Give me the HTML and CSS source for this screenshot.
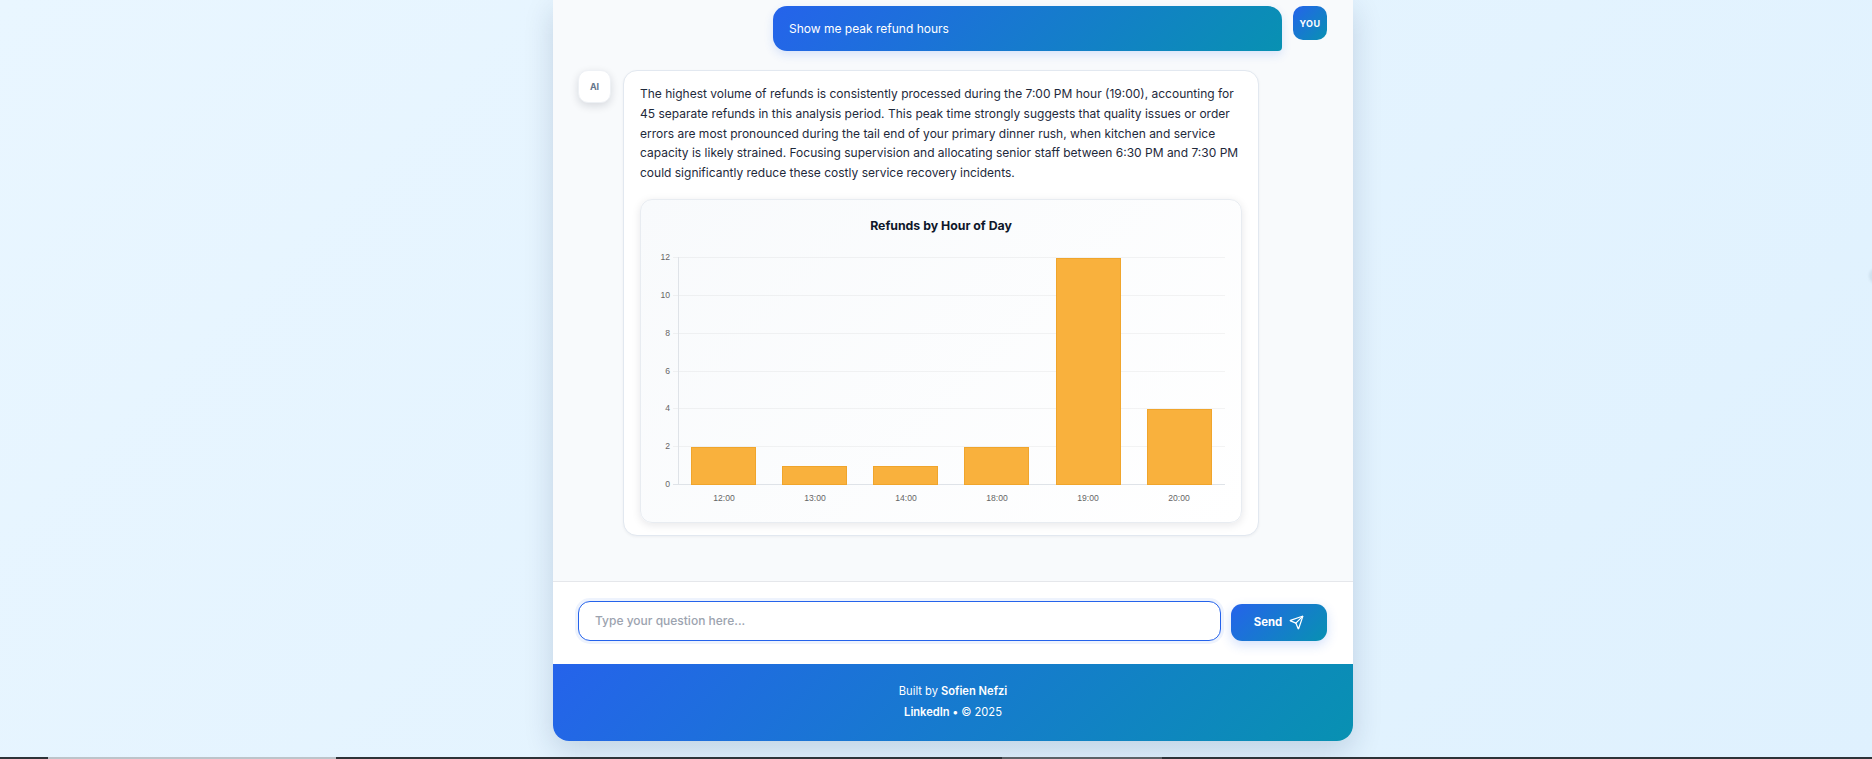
FILE: index.html
```html
<!DOCTYPE html>
<html lang="en">
<head>
<meta charset="utf-8">
<title>Refund Analysis Chat</title>
<link rel="stylesheet" href="styles.css">
</head>
<body>
<div class="edge-blob"></div>
<main class="app">
  <section class="messages">
    <div class="msg msg-user">
      <div class="bubble-user">Show me peak refund hours</div>
      <div class="avatar avatar-user">YOU</div>
    </div>
    <div class="msg msg-ai">
      <div class="avatar avatar-ai">AI</div>
      <div class="bubble-ai">
        <p class="answer">The highest volume of refunds is consistently processed during the 7:00 PM hour (19:00), accounting for 45 separate refunds in this analysis period. This peak time strongly suggests that quality issues or order errors are most pronounced during the tail end of your primary dinner rush, when kitchen and service capacity is likely strained. Focusing supervision and allocating senior staff between 6:30 PM and 7:30 PM could significantly reduce these costly service recovery incidents.</p>
        <div class="chart-card">
          <h3 class="chart-title">Refunds by Hour of Day</h3>
          <svg class="chart" width="600" height="262" viewBox="641 250 600 262">
            <g class="grid">
              <line x1="673" x2="1225" y1="257.5" y2="257.5"/>
              <line x1="673" x2="1225" y1="295.5" y2="295.5"/>
              <line x1="673" x2="1225" y1="333.5" y2="333.5"/>
              <line x1="673" x2="1225" y1="371.5" y2="371.5"/>
              <line x1="673" x2="1225" y1="408.5" y2="408.5"/>
              <line x1="673" x2="1225" y1="446.5" y2="446.5"/>
            </g>
            <g class="axis">
              <line x1="678.5" x2="678.5" y1="257" y2="485"/>
              <line x1="673" x2="1225" y1="484.5" y2="484.5"/>
            </g>
            <g class="bars">
              <rect x="691.5" y="447.5" width="64" height="37"/>
              <rect x="782.5" y="466.5" width="64" height="18"/>
              <rect x="873.5" y="466.5" width="64" height="18"/>
              <rect x="964.5" y="447.5" width="64" height="37"/>
              <rect x="1056.5" y="258.5" width="64" height="226"/>
              <rect x="1147.5" y="409.5" width="64" height="75"/>
            </g>
            <g class="ticks-y">
              <text x="670" y="260">12</text>
              <text x="670" y="298">10</text>
              <text x="670" y="336">8</text>
              <text x="670" y="374">6</text>
              <text x="670" y="411">4</text>
              <text x="670" y="449">2</text>
              <text x="670" y="487">0</text>
            </g>
            <g class="ticks-x">
              <text x="724" y="501">12:00</text>
              <text x="815" y="501">13:00</text>
              <text x="906" y="501">14:00</text>
              <text x="997" y="501">18:00</text>
              <text x="1088" y="501">19:00</text>
              <text x="1179" y="501">20:00</text>
            </g>
          </svg>
        </div>
      </div>
    </div>
  </section>
  <form class="composer">
    <input class="question" type="text" placeholder="Type your question here...">
    <button class="send" type="button">Send
      <svg class="send-icon" viewBox="0 0 24 24" width="15" height="15" fill="none" stroke="currentColor" stroke-width="2" stroke-linecap="round" stroke-linejoin="round"><path d="M14.536 21.686a.5.5 0 0 0 .937-.024l6.5-19a.496.496 0 0 0-.635-.635l-19 6.5a.5.5 0 0 0-.024.937l7.93 3.18a2 2 0 0 1 1.112 1.11z"/><path d="m21.854 2.147-10.94 10.939"/></svg>
    </button>
  </form>
  <footer class="foot">
    <div>Built by <strong>Sofien Nefzi</strong></div>
    <div><strong>LinkedIn •</strong> © 2025</div>
  </footer>
</main>
<div class="taskbar"><span class="tb-a"></span><span class="tb-b"></span></div>
</body>
</html>
```
FILE: styles.css
```css
* { box-sizing: border-box; }
html, body { margin: 0; height: 100%; }
body {
  position: relative;
  overflow: hidden;
  height: 759px;
  font-family: Inter, "Liberation Sans", sans-serif;
  background: linear-gradient(135deg, #e9f6ff 0%, #dff1fe 100%);
}
.app {
  width: 800px;
  height: 741px;
  margin-left: 553px;
  display: flex;
  flex-direction: column;
  border-radius: 0 0 16px 16px;
  overflow: hidden;
  box-shadow: 0 10px 30px rgba(0, 40, 80, .16);
  background: #fff;
}
.messages {
  flex: 1;
  background: #f8fafc;
  padding: 6px 26px 0 25px;
  display: flex;
  flex-direction: column;
  gap: 19px;
  border-bottom: 1px solid #e5e7eb;
  overflow: hidden;
}
.msg { display: flex; gap: 11px; align-items: flex-start; }
.msg-user { justify-content: flex-end; }
.bubble-user {
  width: 509px;
  height: 45px;
  padding: 0 16px;
  display: flex;
  align-items: center;
  font-size: 12px;
  color: #fff;
  background: linear-gradient(135deg, #2563eb, #0891b2);
  border-radius: 14px 14px 4px 14px;
  box-shadow: 0 4px 10px rgba(37, 99, 235, .15);
}
.avatar {
  flex: none;
  display: flex;
  align-items: center;
  justify-content: center;
  font-weight: 700;
  font-size: 9px;
  border-radius: 10px;
}
.avatar-user {
  width: 34px;
  height: 34px;
  color: #fff;
  letter-spacing: .4px;
  background: linear-gradient(135deg, #2563eb, #0891b2);
}
.avatar-ai {
  width: 33px;
  height: 33px;
  color: #64748b;
  background: #fff;
  border: 1px solid #eef1f5;
  box-shadow: 0 3px 8px rgba(15, 23, 42, .14);
}
.msg-ai { gap: 12px; }
.bubble-ai {
  width: 636px;
  padding: 13px 16px 12px;
  background: #fff;
  border: 1px solid #e2e8f0;
  border-radius: 14px;
  box-shadow: 0 1px 3px rgba(15, 23, 42, .05);
}
.answer {
  margin: 0;
  font-size: 12px;
  line-height: 19.8px;
  color: #1e293b;
}
.chart-card {
  margin-top: 16px;
  height: 324px;
  background: linear-gradient(135deg, #f8fafc, #fff);
  border: 1px solid #e8ecf1;
  border-radius: 12px;
  box-shadow: 0 2px 8px rgba(15, 23, 42, .1);
}
.chart-title {
  margin: 0;
  padding-top: 18px;
  height: 50px;
  text-align: center;
  font-size: 12.3px;
  font-weight: 700;
  color: #0f172a;
}
.chart { display: block; }
.grid line { stroke: rgba(0, 0, 0, .045); stroke-width: 1; }
.axis line { stroke: #dfe3e8; stroke-width: 1; }
.bars rect { fill: #f9b13d; stroke: #f0a52c; stroke-width: 1; }
.ticks-y text, .ticks-x text {
  font-family: "Liberation Sans", Arial, sans-serif;
  font-size: 8.6px;
  fill: #666;
}
.ticks-y text { text-anchor: end; }
.ticks-x text { text-anchor: middle; }
.composer {
  height: 82px;
  flex: none;
  display: flex;
  align-items: flex-end;
  gap: 10px;
  padding: 0 26px 23px 25px;
  background: #fff;
}
.question {
  flex: 1;
  height: 40px;
  padding: 0 16px 2px;
  font: 500 12px Inter, "Liberation Sans", sans-serif;
  border: 1px solid #2563eb;
  border-radius: 12px;
  background: #fff;
  outline: none;
  box-shadow: 0 0 0 3px rgba(37, 99, 235, .08);
}
.question::placeholder { color: #9ca3af; opacity: 1; }
.send {
  flex: none;
  width: 96px;
  height: 37px;
  display: flex;
  align-items: center;
  justify-content: center;
  gap: 7px;
  padding: 0 0 1px;
  border: 0;
  border-radius: 11px;
  color: #fff;
  font: 700 11.4px Inter, "Liberation Sans", sans-serif;
  background: linear-gradient(135deg, #2563eb, #0891b2);
  box-shadow: 0 4px 12px rgba(37, 99, 235, .2);
}
.send-icon { flex: none; }
.foot {
  flex: none;
  height: 77px;
  padding-top: 17px;
  text-align: center;
  font-size: 11.15px;
  line-height: 21px;
  color: #fff;
  background: linear-gradient(135deg, #2563eb, #0891b2);
}
.foot strong { font-weight: 600; }
.taskbar {
  position: absolute;
  left: 0; right: 0; bottom: 0;
  height: 2px;
  background: #2d3338;
}
.tb-a, .tb-b { position: absolute; top: 0; height: 2px; }
.tb-a { left: 48px; width: 288px; background: #bcc4ca; }
.tb-b { left: 1002px; width: 160px; background: #5b6166; }
.edge-blob {
  position: absolute;
  right: -12px;
  top: 268px;
  width: 15px;
  height: 16px;
  border-radius: 50%;
  background: rgba(120, 140, 160, .16);
  filter: blur(1px);
}
```
